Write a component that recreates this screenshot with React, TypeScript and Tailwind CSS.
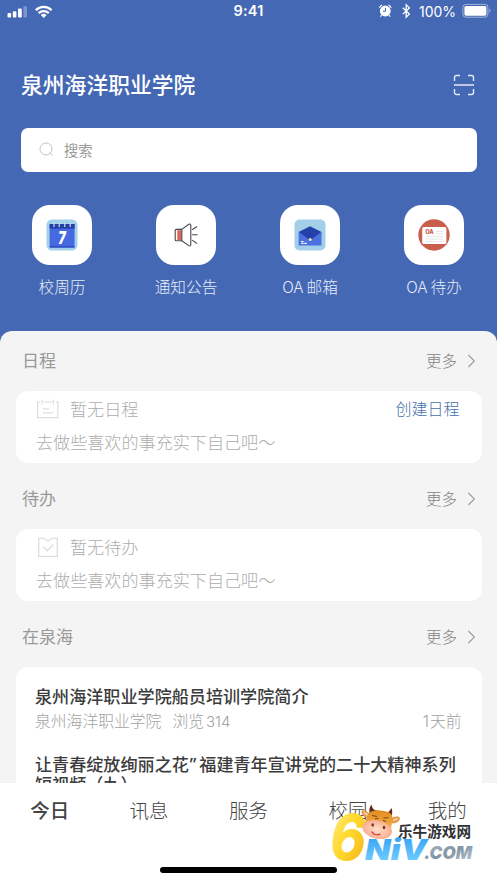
import type { ReactNode } from "react";

function StatusBar() {
  return (
    <div className="relative flex h-[24px] items-center justify-between pl-[7px] pr-[6px]">
      <svg className="h-[24px] w-[50px]" viewBox="0 0 50 24" fill="#fff">
        <rect x="0.5" y="13" width="3.6" height="4.6" rx="1" />
        <rect x="5.8" y="11.2" width="3.6" height="6.4" rx="1" />
        <rect x="11" y="8.6" width="3.8" height="9" rx="1" />
        <rect x="16.4" y="6.2" width="3.6" height="11.4" rx="1" opacity="0.3" />
        <g fill="none" stroke="#fff" strokeWidth="2.3">
          <path d="M28.8 10.2c4.4-4.3 11.4-4.3 15.8 0" />
          <path d="M31.6 13.2c2.9-2.8 7.3-2.8 10.2 0" />
        </g>
        <path d="M33.8 14.9c1.7-1.5 4.1-1.5 5.8 0L36.7 18z" />
      </svg>
      <div className="absolute left-1/2 top-0 -translate-x-1/2 text-[14.5px] font-semibold leading-[22px] tracking-[0.2px]">
        9:41
      </div>
      <div className="flex h-[24px] items-center">
        <svg className="h-[24px] w-[36px]" viewBox="0 0 36 24">
          <circle cx="8.3" cy="11" r="5.4" fill="#fff" />
          <path d="M2.4 7.8a7 7 0 0 1 2.7-2.7M11.5 5.1a7 7 0 0 1 2.7 2.7M4.6 15.2l-1.2 1.4M12 15.2l1.2 1.4" stroke="#fff" strokeWidth="1.2" fill="none" />
          <path d="M8.5 7.8v3.5H5.9" stroke="#4468b4" strokeWidth="1" fill="none" />
          <path d="M25.8 7.8l6.6 6.2-3.2 3.1V4.8l3.2 3.1-6.6 6.2" stroke="#fff" strokeWidth="1.3" fill="none" />
        </svg>
        <span className="ml-[6px] mr-[5px] w-[38px] whitespace-nowrap text-[14px] leading-[24px]">100%</span>
        <svg className="h-[24px] w-[29px]" viewBox="0 0 29 24">
          <rect x="0.9" y="4.4" width="25" height="12.8" rx="3" fill="none" stroke="#fff" strokeWidth="1" opacity="0.5" />
          <rect x="2.4" y="5.9" width="22" height="9.8" rx="1.6" fill="#fff" />
          <path d="M27.3 8.6c1.7.8 1.7 3.6 0 4.4z" fill="#fff" opacity="0.5" />
        </svg>
      </div>
    </div>
  );
}

const CalendarIcon = () => (
  <svg className="h-8 w-8" viewBox="0 0 32 32">
    <rect x="0.5" y="0.5" width="31" height="31" rx="5.5" fill="#a3d0ea" />
    <rect x="3.6" y="5" width="25" height="23.6" rx="1" fill="#4569e1" />
    <path d="M3.6 5h25v4.6h-25z" fill="#2540a5" />
    <path d="M3.6 27.2h25v1.4h-25z" fill="#2c4ab8" />
    <path d="M8 4v4M13.2 4v4M18.8 4v4M24.2 4v4" stroke="#d9edf7" strokeWidth="1.1" />
    <text x="16" y="25" textAnchor="middle" fontSize="17.5" fontWeight="900" fontStyle="italic" fontFamily="Inter, sans-serif" fill="#fff" textLength="7.5" lengthAdjust="spacingAndGlyphs">7</text>
  </svg>
);

const SpeakerIcon = () => (
  <svg className="h-8 w-8" viewBox="0 0 32 32" fill="none" stroke="#48494f" strokeWidth="1.1" strokeLinejoin="round" strokeLinecap="round">
    <rect x="7.3" y="11.2" width="4.2" height="9.8" fill="#e06458" stroke="none" />
    <path d="M11.8 10.4H6.2a1 1 0 0 0-1 1v9.3a1 1 0 0 0 1 1h5.6z" />
    <path d="M11.8 10.4l7-5.2c1.400-.7 2 .1 2 1.200v19.200c0 1.200-.8 1.800-2 1l-7-4.900" />
    <path d="M22.500 10.500l4.200-2.800M22.500 15.800h4.700M22.500 21.400l4.200 2.800" />
  </svg>
);

const MailIcon = () => (
  <svg className="h-8 w-8" viewBox="0 0 32 32">
    <rect x="0.5" y="0.5" width="31" height="31" rx="5" fill="#a3d0e8" />
    <path d="M4.6 13.1L16 19.8l11.5-6.700v13.400H4.600z" fill="#4b70df" />
    <path d="M16 7.200l11.500 5.900L16 21.200 4.600 13.100z" fill="#2440a9" />
    <circle cx="16.2" cy="20.5" r="1.5" fill="#f6dfa4" />
    <path d="M7 22.500h2.500M7 24.300h6" stroke="#fff" strokeWidth="1" />
  </svg>
);

const TodoIcon = () => (
  <svg className="h-8 w-8" viewBox="0 0 32 32">
    <circle cx="16" cy="16" r="15.7" fill="#c95e4d" />
    <rect x="4.2" y="8" width="24.2" height="17" rx="1.6" fill="#fff" />
    <text x="7.3" y="15.400" fontSize="5.600" fontWeight="800" fontFamily="Inter, sans-serif" fill="#c95346">OA</text>
    <path d="M18 12.400h7M18 14.800h7M7.500 17.400H25M7.500 20H25M7.500 22.600H25" stroke="#dedede" strokeWidth="0.8" />
  </svg>
);

const shortcuts: { label: ReactNode; icon: ReactNode }[] = [
  { label: "校周历", icon: <CalendarIcon /> },
  { label: "通知公告", icon: <SpeakerIcon /> },
  { label: <><span className="text-[15.2px]">OA</span><span className="ml-[3px]">邮箱</span></>, icon: <MailIcon /> },
  { label: <><span className="text-[15.2px]">OA</span><span className="ml-[3px]">待办</span></>, icon: <TodoIcon /> },
];

function SectionHeader({ title }: { title: string }) {
  return (
    <div className="flex h-[60px] items-center justify-between pl-[22px] pr-[21px] text-[#999]">
      <h2 className="pt-[2px] text-[17px]">{title}</h2>
      <div className="flex items-center gap-[10px] text-[15.5px] font-light text-[#858585]">
        <span className="pt-[2px]">更多</span>
        <svg className="h-[14px] w-[9px]" viewBox="0 0 9 14" fill="none" stroke="#9b9b9b" strokeWidth="1.1">
          <path d="M1.400 1l6 6-6 6" />
        </svg>
      </div>
    </div>
  );
}

function EmptyCard({ icon, title, action }: { icon: ReactNode; title: string; action?: string }) {
  return (
    <div className="mx-[15.5px] flex h-[72px] flex-col rounded-[12px] bg-white pl-[20.5px] pr-[22px] text-[17.1px] font-light text-[#adadad]">
      <div className="flex h-[37px] items-center">
        {icon}
        <span className="ml-[10px]">{title}</span>
        {action && <span className="ml-auto -mt-[1px] text-[16px] text-[#4671ac]">{action}</span>}
      </div>
      <p className="whitespace-nowrap leading-[29px]">去做些喜欢的事充实下自己吧～</p>
    </div>
  );
}

const ScheduleGlyph = () => (
  <svg className="h-6 w-6" viewBox="0 0 24 24" fill="none" stroke="#dedede" strokeWidth="1.2">
    <path d="M4.500 4H1.600v15.600h20.300V4h-2.400M8 4h8.400M6.100 1.600v5M17.400 1.600v5" />
    <path d="M7 10.800h6M7 14.800h10.500" />
  </svg>
);

const CheckGlyph = () => (
  <svg className="h-6 w-6" viewBox="0 0 24 24" fill="none" stroke="#dedede" strokeWidth="1.3">
    <path d="M2.700 2.400h5.200l4 2.800 4-2.800h5.400v18H2.700zM7.300 10.700l4 4 6-6.200" />
  </svg>
);

function Watermark() {
  return (
    <svg className="pointer-events-none absolute left-[325px] top-[800px] h-[70px] w-[155px] overflow-visible" viewBox="0 0 155 70">
      <defs>
        <linearGradient id="gold" x1="0" y1="0" x2="1" y2="1">
          <stop offset="0" stopColor="#fff08c" />
          <stop offset="0.5" stopColor="#ffd82c" />
          <stop offset="1" stopColor="#f2ae18" />
        </linearGradient>
        <linearGradient id="sky" gradientUnits="userSpaceOnUse" x1="0" y1="38" x2="0" y2="60">
          <stop offset="0" stopColor="#3aa5f5" />
          <stop offset="1" stopColor="#6ccaff" />
        </linearGradient>
        <linearGradient id="steel" x1="0" y1="0" x2="1" y2="1">
          <stop offset="0" stopColor="#b5c0ca" />
          <stop offset="0.5" stopColor="#8293a3" />
          <stop offset="1" stopColor="#bec8d0" />
        </linearGradient>
        <linearGradient id="hide" x1="0" y1="0" x2="0" y2="1">
          <stop offset="0" stopColor="#e08a22" />
          <stop offset="1" stopColor="#f8b74c" />
        </linearGradient>
        <radialGradient id="muzzle">
          <stop offset="0" stopColor="#ffdfcb" />
          <stop offset="1" stopColor="#f6ae90" />
        </radialGradient>
      </defs>
      <text x="5.5" y="58.6" fontSize="60" fontWeight="600" fontStyle="italic" fontFamily="Inter, sans-serif" fill="url(#gold)" stroke="url(#gold)" strokeWidth="2.2" strokeLinejoin="round" textLength="35" lengthAdjust="spacingAndGlyphs">6</text>
      <text x="40" y="60" fontSize="29" fontWeight="900" fontStyle="italic" fontFamily="Inter, sans-serif" fill="url(#sky)" textLength="62" lengthAdjust="spacingAndGlyphs">NiV</text>
      <text x="99" y="58.6" fontSize="18" fontWeight="900" fontStyle="italic" fontFamily="Inter, sans-serif" fill="url(#steel)" textLength="48" lengthAdjust="spacingAndGlyphs">.COM</text>
      <path d="M45 14c-1.500-4-.5-7 1.500-9.500.5 4 2.500 5.500 6 6.500zM62 13c2-1 3-3 4.500-5 1.500 4 .5 8-1 9z" fill="#68281c" />
      <path d="M45 14c-4-4-8-4.500-8.500-2.500 0 4 4 6.500 8 6.500zM66 19c3-3 7.500-3 9-1-.5 4.500-5 6-10 5z" fill="#e89743" />
      <path d="M43 13.500c-2.500-1.500-4-2-4.800-1.300.6 2 2.500 3.300 4.600 3.600zM68 19.500c2-1.500 4-1.600 5-.9-.8 2-3 2.700-5 2.600z" fill="#f8c6a2" />
      <path d="M43.500 14c2-4 10-4.500 15-3 6 .8 9.500 3 9 9l-2 11-26-6c1-4 2-8 4-11z" fill="url(#hide)" />
      <ellipse cx="52.3" cy="29.5" rx="15" ry="9.2" transform="rotate(13 52.3 29.5)" fill="url(#muzzle)" />
      <path d="M47 15.500l5 1M58.500 18l5-.3M50 19l3.500-.6M58 20.500l3 1" stroke="#6b3412" strokeWidth="0.9" fill="none" />
      <ellipse cx="47.7" cy="25" rx="1.3" ry="1.7" fill="#85311e" />
      <ellipse cx="59" cy="27.5" rx="1.3" ry="1.7" fill="#85311e" />
      <path d="M46.500 31.500c2 3 5.500 4 9 2.500" stroke="#d02c27" strokeWidth="1.1" fill="none" />
      <text x="73" y="36.5" fontSize="14.6" fontWeight="700" fontFamily="'Noto Sans CJK SC', sans-serif" fill="#303136">乐牛游戏网</text>
    </svg>
  );
}

const tabs = ["今日", "讯息", "服务", "校园", "我的"];

export default function App() {
  return (
    <div className="relative flex h-[883px] w-[497px] flex-col overflow-hidden bg-[#4468b4] font-['Inter','Noto_Sans_CJK_SC',sans-serif] text-white">
      <StatusBar />
      <header className="flex h-[104px] items-center justify-between px-[21px] pt-[17px]">
        <h1 className="pt-[1px] text-[21.8px] font-medium">泉州海洋职业学院</h1>
        <svg className="mr-[1px] h-[22px] w-[22px]" viewBox="0 0 22 22" fill="none" stroke="#e2e9f8" strokeWidth="1.4">
          <path d="M1.500 7V3.500a2 2 0 0 1 2-2H7M15 1.500h3.500a2 2 0 0 1 2 2V7M20.500 15v3.500a2 2 0 0 1-2 2H15M7 20.500H3.500a2 2 0 0 1-2-2V15M1 11h20" />
        </svg>
      </header>
      <div className="mx-[20.5px] flex h-[43.5px] items-center rounded-[7px] bg-white pl-[18px] text-[14.3px] text-[#999]">
        <svg className="mr-[10.5px] h-[15px] w-[15px]" viewBox="0 0 15 15" fill="none" stroke="#bdbdbd" strokeWidth="0.9">
          <circle cx="7" cy="7" r="6" />
          <path d="M11 11l2.500 2.500" />
        </svg>
        <span className="pt-[1px]">搜索</span>
      </div>
      <nav className="grid h-[159.5px] w-[496px] grid-cols-4 pt-[33.5px]">
        {shortcuts.map((s, i) => (
          <div key={i} className="flex flex-col items-center">
            <div className="flex h-[60px] w-[60px] items-center justify-center rounded-[18px] bg-white">{s.icon}</div>
            <div className="mt-[11px] whitespace-nowrap text-[15.7px] font-light leading-[24px] text-[#e6ecf9]">{s.label}</div>
          </div>
        ))}
      </nav>
      <main className="h-[452px] overflow-hidden rounded-t-[12px] bg-[#f4f4f4]">
        <SectionHeader title="日程" />
        <EmptyCard icon={<ScheduleGlyph />} title="暂无日程" action="创建日程" />
        <div className="mt-[6px]">
          <SectionHeader title="待办" />
        </div>
        <EmptyCard icon={<CheckGlyph />} title="暂无待办" />
        <div className="mt-[6px]">
          <SectionHeader title="在泉海" />
        </div>
        <div className="mx-[15.5px] h-[180px] rounded-[12px] bg-white pl-[19.5px] pr-[20px] pt-[18px]">
          <h3 className="text-[17.1px] font-medium leading-[24px] text-[#3c3c3c]">泉州海洋职业学院船员培训学院简介</h3>
          <div className="flex justify-between text-[15.8px] font-light leading-[26px] text-[#a2a2a2]">
            <span>泉州海洋职业学院<span className="ml-[11px]">浏览</span><span className="ml-[2px] text-[15px]">314</span></span>
            <span>1<span className="ml-[1px]">天前</span></span>
          </div>
          <h3 className="mt-[20px] whitespace-nowrap text-[17.1px] font-medium leading-[20px] text-[#3c3c3c]">
            让青春绽放绚丽之花<span className="inline-block w-[10.5px] pl-[1px] font-['Noto_Sans',sans-serif] leading-[18px]">”</span>福建青年宣讲党的二十大精神系列
            <br />
            短视频（九）
          </h3>
        </div>
      </main>
      <footer className="flex h-[100px] flex-col items-center bg-white">
        <div className="grid h-[84px] w-full grid-cols-5 text-center text-[19.5px] leading-[57px] text-[#444]">
          {tabs.map((t, i) => (
            <span key={t} className={i === 0 ? "font-medium" : "font-light"}>{t}</span>
          ))}
        </div>
        <div className="h-[6px] w-[177px] rounded-full bg-black" />
      </footer>
      <Watermark />
    </div>
  );
}
